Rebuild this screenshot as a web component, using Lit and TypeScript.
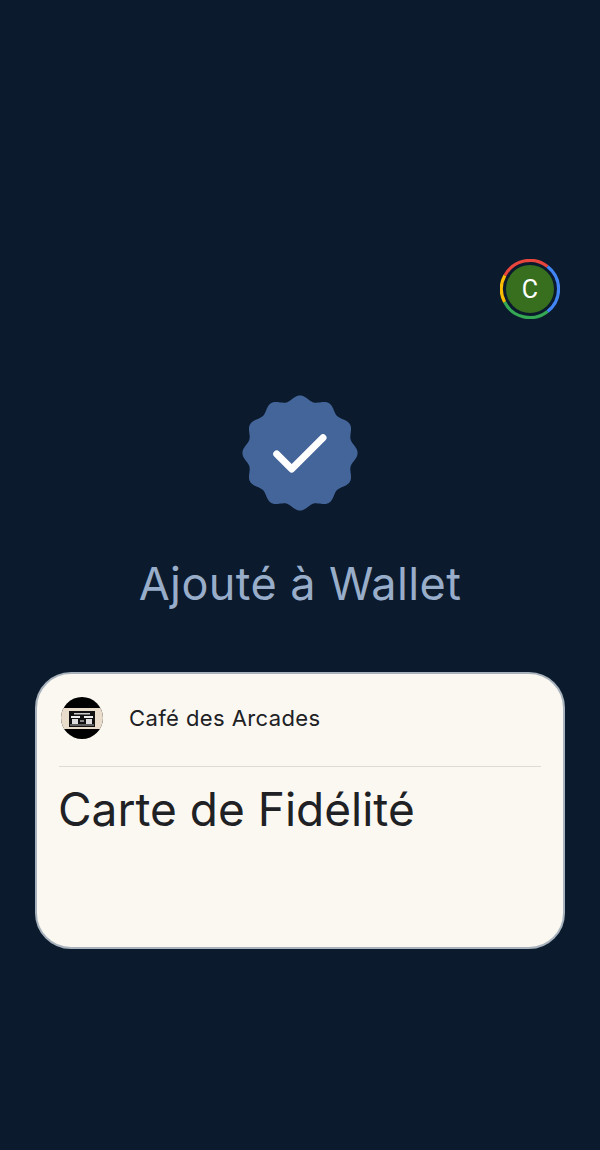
import { LitElement, html, css } from 'lit';
import { customElement } from 'lit/decorators.js';

// 12 soft scallops round the badge, sampled so the outline stays smooth
function badgePath(cx: number, cy: number, r: number, amp: number, bumps: number) {
  const pts: string[] = [];
  const steps = 240;
  for (let i = 0; i < steps; i++) {
    const a = (i / steps) * Math.PI * 2 - Math.PI / 2;
    const rr = r + amp * Math.cos(bumps * (a + Math.PI / 2));
    pts.push(`${(cx + rr * Math.cos(a)).toFixed(2)} ${(cy + rr * Math.sin(a)).toFixed(2)}`);
  }
  return `M${pts.join('L')}Z`;
}

@customElement('app-root')
export class AppRoot extends LitElement {
  static styles = css`
    :host {
      display: block;
      height: 1150px;
      overflow: hidden;
      background: #0b1a2c;
      font-family: Inter, "Noto Sans", sans-serif;
    }
    .page {
      display: flex;
      flex-direction: column;
      align-items: center;
      padding-top: 259px;
    }
    .avatar-row {
      align-self: stretch;
      display: flex;
      justify-content: flex-end;
      padding-right: 40px;
    }
    .avatar {
      position: relative;
      width: 60px;
      height: 60px;
      display: flex;
      align-items: center;
      justify-content: center;
    }
    .avatar svg {
      position: absolute;
      inset: 0;
    }
    .avatar span {
      position: relative;
      color: #fff;
      font: 400 25px Roboto, sans-serif;
    }
    .badge {
      display: block;
      margin-top: 76px;
    }
    h1 {
      margin: 45px 0 0;
      font-size: 45px;
      line-height: 56px;
      font-weight: 400;
      letter-spacing: 0.4px;
      color: #98adc9;
    }
    .card {
      box-sizing: border-box;
      width: 530px;
      height: 277px;
      margin-top: 60px;
      padding: 0 22px;
      background: #fbf8f2;
      border: 2px solid #a8b2bc;
      border-radius: 36px;
    }
    .card-head {
      display: flex;
      align-items: center;
      gap: 26px;
      height: 88px;
      padding: 0 0 4px 2px;
      border-bottom: 1px solid #dddbd6;
    }
    .logo {
      width: 42px;
      height: 42px;
      flex: none;
      display: block;
    }
    .issuer {
      font-size: 22px;
      color: #202124;
      letter-spacing: 0.4px;
    }
    .card-title {
      margin: 12px 0 0 -1px;
      font-size: 46px;
      line-height: 60px;
      font-weight: 400;
      color: #202124;
    }
  `;

  render() {
    return html`
      <div class="page">
        <div class="avatar-row">
          <div class="avatar">
            <svg width="60" height="60" viewBox="0 0 60 60" fill="none" stroke-width="3.2">
              <path d="M4.8 16.6A28.4 28.4 0 0 1 47.5 7.5" stroke="#e8453c" />
              <path d="M47.5 7.5A28.4 28.4 0 0 1 47.5 52.5" stroke="#4285f4" />
              <path d="M47.5 52.5A28.4 28.4 0 0 1 4.6 43" stroke="#34a853" />
              <path d="M4.6 43A28.4 28.4 0 0 1 4.8 16.6" stroke="#fbbc04" />
              <circle cx="30" cy="30" r="24" fill="#386f1f" stroke="none" />
            </svg>
            <span>C</span>
          </div>
        </div>
        <svg class="badge" width="116" height="116" viewBox="0 0 116 116">
          <path d=${badgePath(58, 58, 55, 2.6, 12)} fill="#44659a" />
          <path d="M34.7 59 L49.7 74 L81 42.7" fill="none" stroke="#fff" stroke-width="7" stroke-linecap="round" stroke-linejoin="round" />
        </svg>
        <h1>Ajouté à Wallet</h1>
        <div class="card">
          <div class="card-head">
            <svg class="logo" viewBox="0 0 42 42">
              <defs><clipPath id="c"><circle cx="21" cy="21" r="21" /></clipPath></defs>
              <g clip-path="url(#c)">
                <rect width="42" height="42" fill="#000" />
                <rect y="11" width="42" height="21" fill="#e9dccb" />
                <rect x="8" y="14" width="26" height="16" fill="#111" />
                <rect x="13" y="16" width="16" height="1.5" fill="#ccc" />
                <rect x="10" y="19" width="9" height="2" fill="#eee" />
                <rect x="23" y="19" width="9" height="2" fill="#eee" />
                <rect x="11" y="22" width="6" height="5" fill="#ddd" />
                <rect x="25" y="22" width="6" height="5" fill="#ddd" />
                <rect x="19" y="23" width="4" height="2" fill="#888" />
                <rect x="9" y="27.5" width="24" height="1" fill="#aaa" />
              </g>
            </svg>
            <span class="issuer">Café des Arcades</span>
          </div>
          <div class="card-title">Carte de Fidélité</div>
        </div>
      </div>
    `;
  }
}
